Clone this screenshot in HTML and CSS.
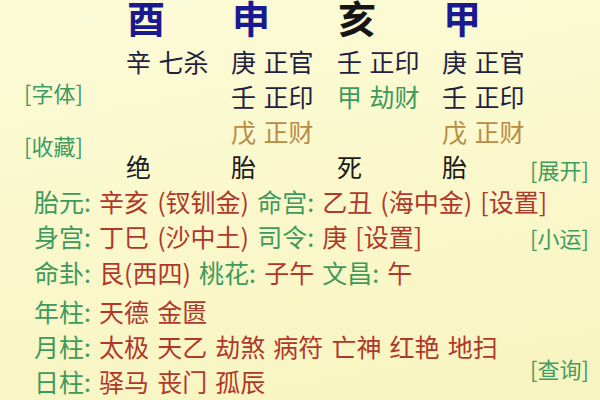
FILE: index.html
```html
<!DOCTYPE html>
<html lang="zh-CN">
<head>
<meta charset="utf-8">
<title>八字排盘</title>
<link rel="stylesheet" href="styles.css">
</head>
<body>
<div class="page">
  <div class="pillars">
    <div class="side-left">
      <span class="link">[字体]</span>
      <span class="link">[收藏]</span>
    </div>
    <div></div>
    <div class="big blue">酉</div>
    <div class="big blue">申</div>
    <div class="big black">亥</div>
    <div class="big blue">甲</div>
    <div></div>

    <div class="cell navy">辛 七杀</div>
    <div class="cell navy">庚 正官</div>
    <div class="cell navy">壬 正印</div>
    <div class="cell navy">庚 正官</div>
    <div></div>

    <div></div>
    <div class="cell navy">壬 正印</div>
    <div class="cell green">甲 劫财</div>
    <div class="cell navy">壬 正印</div>
    <div></div>

    <div></div>
    <div class="cell tan">戊 正财</div>
    <div></div>
    <div class="cell tan">戊 正财</div>
    <div></div>

    <div class="cell dark">绝</div>
    <div class="cell dark">胎</div>
    <div class="cell dark">死</div>
    <div class="cell dark">胎</div>
    <div class="link expand">[展开]</div>
  </div>

  <div class="info">
    <div class="row"><span class="k">胎元:</span> <span class="v">辛亥 (钗钏金)</span> <span class="k">命宫:</span> <span class="v">乙丑 (海中金) [设置]</span></div>
    <div class="row split"><span class="txt"><span class="k">身宫:</span> <span class="v">丁巳 (沙中土)</span> <span class="k">司令:</span> <span class="v">庚 [设置]</span></span><span class="link side-r">[小运]</span></div>
    <div class="row"><span class="k">命卦:</span> <span class="v">艮(西四)</span> <span class="k">桃花:</span> <span class="v">子午</span> <span class="k">文昌:</span> <span class="v">午</span></div>
    <div class="row gap"><span class="k">年柱:</span> <span class="v">天德 金匮</span></div>
    <div class="pair">
      <div class="pair-rows">
        <div class="row"><span class="k">月柱:</span> <span class="v">太极 天乙 劫煞 病符 亡神 红艳 地扫</span></div>
        <div class="row"><span class="k">日柱:</span> <span class="v">驿马 丧门 孤辰</span></div>
      </div>
      <span class="link side-r query">[查询]</span>
    </div>
  </div>
</div>
</body>
</html>
```

FILE: styles.css
```css
html, body {
  margin: 0;
  padding: 0;
}

body {
  width: 600px;
  height: 400px;
  overflow: hidden;
  background: linear-gradient(170deg, #fcfbd8 0%, #faf8cc 45%, #f8f4c0 100%);
  font-family: "Noto Sans CJK SC", "Noto Sans", sans-serif;
  font-weight: 400;
}

.page {
  width: 600px;
  height: 400px;
}

.pillars {
  display: grid;
  grid-template-columns: 126px 105px 106px 105px 87px 71px;
  grid-template-rows: 44px repeat(4, 35px);
  align-items: start;
}

.side-left {
  grid-column: 1;
  grid-row: 2 / 6;
  display: flex;
  flex-direction: column;
  padding-left: 24px;
  padding-top: 31px;
  gap: 18px;
}

.link {
  color: #3f9c62;
  font-size: 22px;
  line-height: 35px;
}

.big {
  font-size: 38px;
  line-height: 34px;
  font-weight: 700;
  padding-left: 1px;
}

.blue { color: #1a1a90; }
.black { color: #151515; }

.cell {
  font-size: 25px;
  line-height: 35px;
  word-spacing: 2px;
  white-space: nowrap;
}

.navy { color: #1f2140; }
.dark { color: #1b1b1b; }
.green { color: #3e9a5a; }
.tan { color: #b68c47; }

.expand {
  padding-top: 3px;
  padding-left: 1px;
}

.info {
  padding-left: 34px;
}

.row {
  font-size: 25px;
  line-height: 35px;
  white-space: nowrap;
  word-spacing: 2.5px;
}

.row.split {
  display: flex;
  align-items: baseline;
}

.row.gap {
  margin-top: 4px;
}

.k { color: #3e9a5c; }
.v { color: #b0382b; }

.side-r {
  margin-left: auto;
  width: 70px;
  word-spacing: 0;
}

.pair {
  display: flex;
  align-items: center;
}

.query {
  padding-top: 8px;
}
```
